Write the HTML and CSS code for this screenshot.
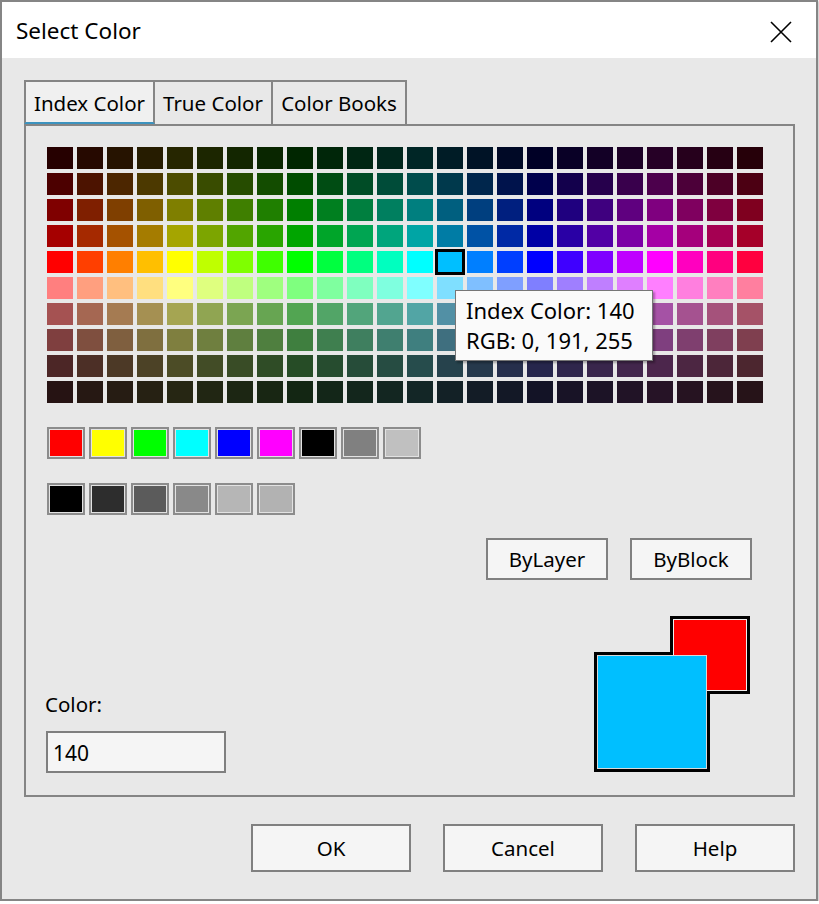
FILE: index.html
```html
<!DOCTYPE html>
<html>
<head>
<meta charset="utf-8">
<title>Select Color</title>
<link rel="stylesheet" href="styles.css">
</head>
<body>
<div class="window">
  <div class="titlebar">
    <span class="title">Select Color</span>
    <svg class="close" width="24" height="24" viewBox="0 0 24 24"><path d="M2 2 L22 22 M22 2 L2 22" stroke="#000" stroke-width="1.6" fill="none"/></svg>
  </div>
  <div class="content">
    <div class="tabs">
      <div class="tab active">Index Color</div>
      <div class="tab">True Color</div>
      <div class="tab">Color Books</div>
    </div>
    <div class="panel">
      <div class="palette" id="palette"></div>
      <div class="swatches">
        <div class="swatch" style="background:#ff0000"></div>
        <div class="swatch" style="background:#ffff00"></div>
        <div class="swatch" style="background:#00ff00"></div>
        <div class="swatch" style="background:#00ffff"></div>
        <div class="swatch" style="background:#0000ff"></div>
        <div class="swatch" style="background:#ff00ff"></div>
        <div class="swatch" style="background:#000000"></div>
        <div class="swatch" style="background:#808080"></div>
        <div class="swatch" style="background:#c0c0c0"></div>
      </div>
      <div class="swatches">
        <div class="swatch" style="background:#000000"></div>
        <div class="swatch" style="background:#2d2d2d"></div>
        <div class="swatch" style="background:#5b5b5b"></div>
        <div class="swatch" style="background:#898989"></div>
        <div class="swatch" style="background:#b6b6b6"></div>
        <div class="swatch" style="background:#b2b2b2"></div>
      </div>
      <div class="bybuttons">
        <button class="btn by">ByLayer</button>
        <button class="btn by">ByBlock</button>
      </div>
      <div class="bottom">
        <div class="colorfield">
          <label class="label">Color:</label>
          <div class="input">140</div>
        </div>
        <div class="preview">
          <div class="pv-new-frame"></div>
          <div class="pv-old"></div>
          <div class="pv-new-fill"></div>
        </div>
      </div>
    </div>
  </div>
  <div class="footer">
    <button class="btn big">OK</button>
    <button class="btn big">Cancel</button>
    <button class="btn big">Help</button>
  </div>
  <div class="tooltip">
    <div>Index Color: 140</div>
    <div>RGB: 0, 191, 255</div>
  </div>
</div>
<script src="script.js"></script>
</body>
</html>
```

FILE: styles.css
```css
* { box-sizing: border-box; }
html, body { margin: 0; padding: 0; background: #ffffff; }
body {
  font-family: "Noto Sans", "Open Sans", "DejaVu Sans", sans-serif;
  font-size: 20px;
  color: #000;
}
.window {
  position: relative;
  width: 818px;
  height: 901px;
  border: 2px solid #858585;
  background: #e8e8e8;
  display: flex;
  flex-direction: column;
  box-shadow: 1px 1px 2px rgba(0,0,0,0.25);
}
.titlebar {
  height: 56px;
  background: #ffffff;
  display: flex;
  align-items: center;
  justify-content: space-between;
  padding: 3px 23px 0 14px;
}
.title { font-size: 22.5px; line-height: 1; }
.close { display: block; margin-top: 1px; }
.content {
  padding: 22px 21px 0 22px;
}
.tabs {
  display: flex;
  height: 44px;
}
.tab {
  height: 44px;
  border: 2px solid #858585;
  border-bottom: none;
  margin-right: -2px;
  display: flex;
  align-items: center;
  justify-content: center;
  background: #e8e8e8;
  line-height: 1;
  font-size: 20.5px;
}
.tab:nth-child(1) { width: 131px; }
.tab:nth-child(2) { width: 120px; }
.tab:nth-child(3) { width: 136px; }
.tab.active {
  background: #f0f0f0;
  border-bottom: 2px solid #3c93bf;
  position: relative;
  z-index: 1;
  padding-top: 2px;
}
.panel {
  height: 673px;
  border: 2px solid #858585;
  padding: 21px 0 22px 21px;
  display: flex;
  flex-direction: column;
}
.palette {
  display: grid;
  grid-template-columns: repeat(24, 26px);
  grid-auto-rows: 22px;
  gap: 4px;
}
.cell { width: 26px; height: 22px; }
.cell.sel {
  outline: 3px solid #000;
  outline-offset: -1px;
  position: relative;
}
.swatches {
  display: flex;
  gap: 4px;
  margin-top: 24px;
}
.swatch {
  width: 38px;
  height: 32px;
  border: 2px solid #8c8c8c;
  box-shadow: inset 0 0 0 1px #e2e2e2;
}
.btn {
  font-family: inherit;
  font-size: 20.5px;
  color: #000;
  background: #f5f5f5;
  border: 2px solid #808080;
  padding: 0;
  line-height: 1;
  border-radius: 0;
}
.bybuttons {
  display: flex;
  justify-content: flex-end;
  gap: 22px;
  margin-top: 23px;
  padding-right: 41px;
}
.btn.by { width: 122px; height: 42px; }
.bottom {
  flex: 1;
  display: flex;
  justify-content: space-between;
  align-items: flex-end;
  padding-right: 43px;
}
.colorfield { display: flex; flex-direction: column; margin-left: -1px; }
.label { line-height: 1; margin-bottom: 17px; margin-left: -1px; font-size: 20.5px; }
.input {
  width: 180px;
  height: 42px;
  border: 2px solid #7f7f7f;
  background: #f5f5f5;
  padding-left: 5px;
  padding-top: 2px;
  display: flex;
  align-items: center;
  line-height: 1;
  font-size: 21px;
}
.preview {
  position: relative;
  width: 156px;
  height: 156px;
  margin-bottom: 1px;
}
.pv-new-frame {
  position: absolute;
  left: 0;
  top: 36px;
  width: 116px;
  height: 120px;
  border: 3px solid #000;
  background: #e8e8e8;
}
.pv-old {
  position: absolute;
  left: 76px;
  top: 0;
  width: 80px;
  height: 78px;
  border: 3px solid #000;
  background: #ff0000;
  box-shadow: inset 0 0 0 1px #eeeeee;
}
.pv-new-fill {
  position: absolute;
  left: 4px;
  top: 40px;
  width: 108px;
  height: 112px;
  background: #00bfff;
  box-shadow: 0 0 0 1px #d8d8d8;
}
.footer {
  display: flex;
  justify-content: flex-end;
  gap: 32px;
  padding: 27px 21px 0 0;
}
.btn.big { width: 160px; height: 48px; }
.tooltip {
  position: absolute;
  left: 453px;
  top: 288px;
  width: 198px;
  height: 71px;
  background: #fafafa;
  border: 1px solid #767676;
  box-shadow: 2px 2px 2px rgba(0,0,0,0.3);
  padding: 4px 0 0 10px;
  line-height: 30px;
  font-size: 22px;
  z-index: 5;
}
```

FILE: script.js
```js
(function () {
  var lv = [0, 63, 127, 191, 255];
  function hue(j) {
    var s = Math.floor(j / 4), f = j % 4;
    switch (s) {
      case 0: return [255, lv[f], 0];
      case 1: return [lv[4 - f], 255, 0];
      case 2: return [0, 255, lv[f]];
      case 3: return [0, lv[4 - f], 255];
      case 4: return [lv[f], 0, 255];
      default: return [255, 0, lv[4 - f]];
    }
  }
  var vals = { 0: 255, 2: 165, 4: 127, 6: 76, 8: 38 };
  var rows = [8, 6, 4, 2, 0, 1, 3, 5, 7, 9];
  var pal = document.getElementById('palette');
  rows.forEach(function (k) {
    for (var j = 0; j < 24; j++) {
      var h = hue(j), rgb;
      if (k % 2 === 0) {
        var V = vals[k];
        rgb = h.map(function (c) { return Math.round(c * V / 255); });
      } else {
        var V2 = vals[k - 1], lo = Math.floor(V2 / 2);
        rgb = h.map(function (c) { return Math.round(lo + c * (V2 - lo) / 255); });
      }
      var d = document.createElement('div');
      d.className = 'cell' + (k === 0 && j === 13 ? ' sel' : '');
      d.style.background = 'rgb(' + rgb.join(',') + ')';
      pal.appendChild(d);
    }
  });
})();
```
